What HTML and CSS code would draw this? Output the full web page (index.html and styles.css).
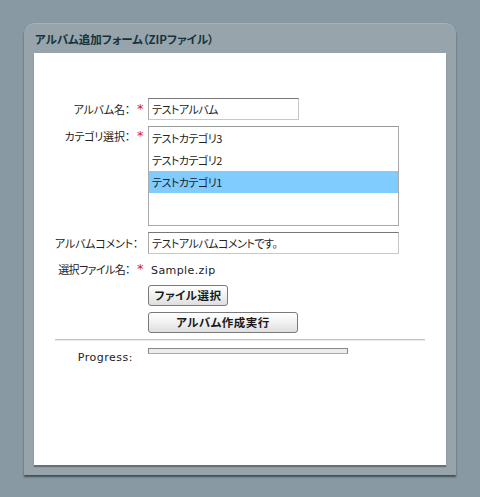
FILE: index.html
```html
<!DOCTYPE html>
<html lang="ja">
<head>
<meta charset="utf-8">
<title>アルバム追加フォーム</title>
<link rel="stylesheet" href="styles.css">
</head>
<body>
<div class="panel">
  <div class="title">アルバム追加フォーム（ZIPファイル）</div>
  <div class="content">
    <div class="form">
      <div class="row r-name">
        <div class="label">アルバム名：</div>
        <div class="req">*</div>
        <div class="field"><div class="input w-short">テストアルバム</div></div>
      </div>
      <div class="row r-cat">
        <div class="label top">カテゴリ選択：</div>
        <div class="req top">*</div>
        <div class="field">
          <div class="listbox">
            <div class="opt">テストカテゴリ3</div>
            <div class="opt">テストカテゴリ2</div>
            <div class="opt selected">テストカテゴリ1</div>
          </div>
        </div>
      </div>
      <div class="row r-comment">
        <div class="label">アルバムコメント：</div>
        <div class="req"></div>
        <div class="field"><div class="input w-long">テストアルバムコメントです。</div></div>
      </div>
      <div class="row r-file">
        <div class="label narrow">選択ファイル名：</div>
        <div class="req">*</div>
        <div class="field"><span class="fname">Sample.zip</span></div>
      </div>
      <div class="row r-btn1">
        <div class="label"></div>
        <div class="req"></div>
        <div class="field"><button class="btn btn-file">ファイル選択</button></div>
      </div>
      <div class="row r-btn2">
        <div class="label"></div>
        <div class="req"></div>
        <div class="field"><button class="btn btn-create">アルバム作成実行</button></div>
      </div>
      <div class="divider"></div>
      <div class="row r-progress">
        <div class="label latin">Progress:</div>
        <div class="req"></div>
        <div class="field"><div class="progress"></div></div>
      </div>
    </div>
  </div>
</div>
</body>
</html>
```

FILE: styles.css
```css
html, body {
  margin: 0;
  padding: 0;
}
body {
  background: #8899a3;
  font-family: "Noto Sans CJK JP", "DejaVu Sans", sans-serif;
  font-size: 11px;
  color: #222;
  font-feature-settings: "palt";
  padding-top: 23px;
  height: 497px;
  box-sizing: border-box;
}
.panel {
  margin-left: 24px;
  width: 432px;
  height: 452px;
  background: #98a4ab;
  border-radius: 11px 11px 0 0;
  box-shadow: 0 2px 2px rgba(40, 55, 62, 0.75), inset 0 1px 0 rgba(255,255,255,0.15);
  display: flex;
  flex-direction: column;
  align-items: center;
}
.title {
  align-self: stretch;
  height: 30px;
  box-sizing: border-box;
  padding: 8px 0 0 11px;
  font-size: 11.5px;
  line-height: 16px;
  font-weight: bold;
  color: #14343b;
  letter-spacing: 0;
}
.content {
  width: 412px;
  height: 412px;
  background: #fff;
  box-shadow: 0 2px 1px rgba(70, 80, 86, 0.6);
  box-sizing: border-box;
  padding: 45px 21px 0 21px;
}
.form {
  display: flex;
  flex-direction: column;
}
.row {
  display: grid;
  grid-template-columns: 75px 18px 1fr;
  align-items: center;
}
.label {
  text-align: right;
  white-space: nowrap;
  line-height: 16px;
  font-size: 11px;
  letter-spacing: -0.2px;
}
.label.narrow {
  letter-spacing: -0.6px;
}
.label.top, .req.top {
  align-self: start;
  margin-top: 2px;
}
.req {
  color: #e02020;
  font-family: "DejaVu Sans", sans-serif;
  font-size: 13px;
  line-height: 16px;
  padding-left: 7px;
}
.input {
  height: 22px;
  box-sizing: border-box;
  border: 1px solid #c8c8c8;
  border-top-color: #777;
  border-left-color: #aaa;
  padding: 0 3px;
  line-height: 20px;
  white-space: nowrap;
  letter-spacing: -0.5px;
}
.w-short { width: 151px; }
.w-long { width: 251px; }
.r-cat { margin-top: 6px; }
.listbox {
  width: 251px;
  height: 100px;
  box-sizing: border-box;
  border: 1px solid #aaa;
  border-top-color: #999;
}
.opt {
  height: 22px;
  line-height: 22px;
  padding-left: 3px;
  white-space: nowrap;
  letter-spacing: -0.5px;
}
.opt.selected {
  background: #80ccff;
}
.r-comment { margin-top: 6px; }
.r-file {
  margin-top: 4px;
  height: 22px;
}
.fname {
  font-family: "DejaVu Sans", sans-serif;
  font-size: 11px;
  letter-spacing: 0.4px;
  padding-left: 3px;
}
.r-btn1 { margin-top: 5px; }
.r-btn2 { margin-top: 6px; }
.btn {
  height: 21px;
  box-sizing: border-box;
  border: 1px solid #7a7a7a;
  border-radius: 3px;
  background: linear-gradient(#ffffff, #f1f1f1 50%, #dedede);
  font-family: "Noto Sans CJK JP", sans-serif;
  font-feature-settings: "palt";
  font-size: 11.5px;
  font-weight: bold;
  color: #1a1a1a;
  padding: 0;
  line-height: 19px;
  display: block;
  letter-spacing: 0.5px;
}
.btn-file { width: 80px; }
.btn-create { width: 150px; }
.divider {
  margin-top: 6px;
  height: 1px;
  background: #c4c4c4;
  border-bottom: 1px solid #ececec;
}
.r-progress {
  margin-top: 7px;
  align-items: start;
}
.label.latin {
  font-family: "DejaVu Sans", sans-serif;
  font-size: 11px;
  letter-spacing: 0.5px;
  padding-top: 2px;
  margin-right: -3px;
}
.progress {
  width: 200px;
  height: 6px;
  box-sizing: border-box;
  border: 1px solid #888;
  border-bottom-color: #aaa;
  background: #ececec;
}
```
